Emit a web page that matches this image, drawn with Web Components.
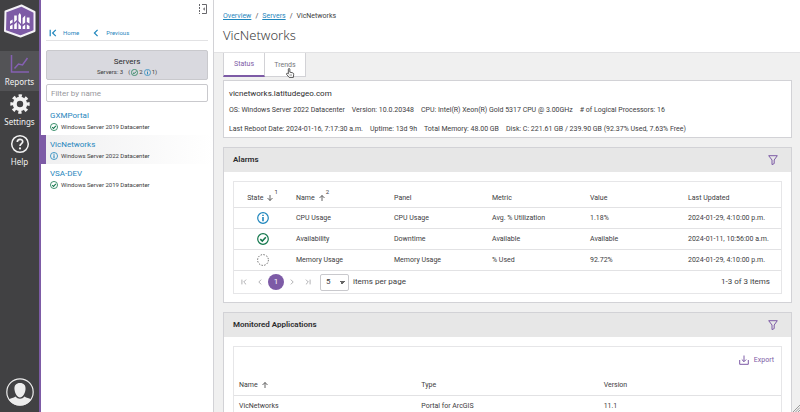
<!DOCTYPE html>
<html lang="en">
<head>
<meta charset="utf-8">
<meta name="viewport" content="width=device-width, initial-scale=1">
<title>VicNetworks</title>
<style>
    body {
        margin: 0;
        height: 100vh;
        overflow: hidden;
        font-family: Roboto, "Noto Sans", sans-serif;
        font-size: 7px;
        line-height: 10px;
        color: #3c3c3e;
        --purple: #7d5ba6;
        --link: #1f86bd;
        --edge: #d2d2d6;
        --wide-font: "Noto Sans", "Open Sans", sans-serif;
    }
</style>
</head>
<body>
<monitor-app></monitor-app>

<script>
const ICONS = {
    logo: `<svg viewBox="0 0 34 34"><path d="M18.500 1.500 31.500 8v19L17.500 32.500 2 27 2.500 7.500Z" fill="#7d5ba6" stroke="#f4f2f7" stroke-width="2" stroke-linejoin="round"/>
        <g fill="#fff"><path d="M7 22l2.600-1.500V25H7zM11.200 20.500l2.600-2.500v7h-2.600zM15.400 19l2.600 3v3h-2.600zM19.600 22.500l2.600-2V25h-2.600zM23.800 20.500l2.700 1.500v3h-2.700z"/>
        <path d="M7 17l2.600-1.500v3L7 20zM11.200 11.500h2.600v4.500l-2.600 2.500zM15.400 11l1.300-2 1.300 2v9l-2.600-3zM19.600 14l2.600-2.500v7l-2.600 2zM23.800 13.500h2.700v6l-2.700-1.500z"/></g></svg>`,
    chart: `<svg viewBox="0 0 20 20" fill="none" stroke="#8560b3" stroke-width="1.500"><path d="M1.500 1v17H19M4.500 14.500l4-4.500 4 1L17.500 4"/></svg>`,
    gear: `<svg viewBox="0 0 20 20" fill="none" stroke="#f2f2f2"><circle cx="10" cy="10" r="5.200" stroke-width="4"/><circle cx="10" cy="10" r="8" stroke-width="3.400" stroke-dasharray="3.142" transform="rotate(-11.250 10 10)"/></svg>`,
    help: `<svg viewBox="0 0 20 20" fill="none" stroke="#f2f2f2" stroke-width="1.500"><circle cx="10" cy="10" r="8.300"/><path d="M7.300 8C7.300 4.500 12.700 4.500 12.700 7.800c0 1.800-2.700 2-2.700 4.200" stroke-width="1.700"/><circle cx="10" cy="14.400" r="1.100" fill="#f2f2f2" stroke="none"/></svg>`,
    user: `<svg viewBox="0 0 28 28"><circle cx="14" cy="14" r="13.200" fill="#414143" stroke="#ececec" stroke-width="1.200"/><path fill="#ececec" d="M14 5c-3.800 0-6 2.300-5.500 6.500.4 4 2.800 8 5.500 8s5.100-4 5.500-8C20 7.300 17.800 5 14 5zM3 21.500c2-1.500 4.500-1.500 6.500-3 1.500 1.500 2.500 2.200 4.500 2.200s3-.7 4.500-2.200c2 1.500 4.500 1.500 6.500 3C22.500 25.500 19 27.500 14 27.500S5.500 25.500 3 21.500z"/></svg>`,
    first: `<svg viewBox="0 0 10 10" fill="none" stroke="currentColor" stroke-width="1.500"><path d="M1.500 1v8M8.500 1 4.500 5l4 4"/></svg>`,
    prev: `<svg viewBox="0 0 10 10" fill="none" stroke="currentColor" stroke-width="1.500"><path d="M7 1 3 5l4 4"/></svg>`,
    next: `<svg viewBox="0 0 10 10" fill="none" stroke="currentColor" stroke-width="1.500"><path d="M3 1l4 4-4 4"/></svg>`,
    last: `<svg viewBox="0 0 10 10" fill="none" stroke="currentColor" stroke-width="1.500"><path d="M8.500 1v8M1.500 1l4 4-4 4"/></svg>`,
    collapse: `<svg viewBox="0 0 8 10" fill="none" stroke="#68686c"><path d="M3 .5h4.500v9H3"/><path d="M.5 0v10" stroke-dasharray="2 1"/><path d="M5.800 3.200 4 5l1.800 1.800z" fill="#68686c" stroke="none"/></svg>`,
    ok: `<svg viewBox="0 0 12 12" fill="none" stroke="#12774c"><circle cx="6" cy="6" r="5.300" stroke-width="1.200"/><path d="m3.300 6.200 2 1.900 3.500-3.800" stroke-width="1.600"/></svg>`,
    info: `<svg viewBox="0 0 12 12" fill="none" stroke="#1f86bd"><circle cx="6" cy="6" r="5.300" stroke-width="1.200"/><path d="M6 5v4.300M6 2.700v1.400" stroke-width="1.600"/></svg>`,
    unknown: `<svg viewBox="0 0 12 12" fill="none" stroke="#666"><circle cx="6" cy="6" r="5.400" stroke-width="1" stroke-dasharray="1.400 1.400"/></svg>`,
    up: `<svg viewBox="0 0 8 8" fill="none" stroke="currentColor" stroke-width=".8"><path d="M4 7V1.500M1.500 4 4 1.500 6.500 4"/></svg>`,
    down: `<svg viewBox="0 0 8 8" fill="none" stroke="currentColor" stroke-width=".8"><path d="M4 1v5.500M1.500 4 4 6.500 6.500 4"/></svg>`,
    filter: `<svg viewBox="0 0 10 10" fill="none" stroke="#7d5ba6" stroke-width="1"><path d="M.7.700h8.600L6.200 5v3.600l-2.200 1V5z"/></svg>`,
    download: `<svg viewBox="0 0 10 10" fill="none" stroke="#7d5ba6" stroke-width="1"><path d="M.7 5v4.300h8.600V5M5 .5v6M2.800 4.500 5 6.700l2.200-2.200"/></svg>`,
    hand: `<svg viewBox="0 0 10 12"><path d="M3 7V1.500C3 .3 4.800.300 4.800 1.500V5l3.400.8c1 .3 1.300 1 1.200 2L9 11.300H4L.8 7.500C.4 6.500 1.500 6 2.200 6.500z" fill="#fff" stroke="#222" stroke-width=".9"/><path d="M5 7.500v2M6.500 7.500v2" stroke="#222" stroke-width=".5"/></svg>`,
    grip: `<svg viewBox="0 0 8 8" stroke="#9a9a9a" stroke-width="1"><path d="M1 8 8 1M3.500 8 8 3.500M6 8l2-2"/></svg>`
};

class BaseElement extends HTMLElement {

    constructor(){
        super();
        this.shadowDOM = this.attachShadow({mode:"open"});
    }

    connectedCallback(){
        this.render();
    }
}

class AppIcon extends BaseElement {

    render(){
        this.shadowDOM.innerHTML = `
        <style>
            :host {
                display: inline-block;
                flex: none;
                width: var(--size, 10px);
                height: var(--size, 10px);
            }
            svg {
                display: block;
                width: 100%;
                height: 100%;
            }
        </style>
        ${ICONS[this.getAttribute("name")]}`;
    }
}

class RailLink extends BaseElement {

    render(){
        this.shadowDOM.innerHTML = `
        <style>
            :host {
                display: block;
            }
            a {
                display: flex;
                flex-direction: column;
                align-items: center;
                gap: 2px;
                padding: 3px 0;
                font-family: var(--wide-font);
                font-size: 8px;
                line-height: 12px;
                color: #f2f2f2;
                text-decoration: none;
            }
            :host([active]) a {
                background: #535356;
            }
            app-icon {
                --size: 20px;
            }
        </style>
        <a href="#"><app-icon name="${this.getAttribute("icon")}"></app-icon><slot></slot></a>`;
    }
}

class NavRail extends BaseElement {

    render(){
        this.shadowDOM.innerHTML = `
        <style>
            :host {
                display: flex;
                flex-direction: column;
                width: 39px;
                background: #414143;
                border-right: 2px solid var(--purple);
            }
            .logo {
                --size: 34px;
                align-self: center;
                margin: 4px 0 13px;
            }
            .user {
                --size: 28px;
                display: block;
                align-self: center;
                margin: auto 0 6px;
                padding: 0;
                border: 0;
                background: none;
            }
            .user app-icon {
                display: block;
            }
        </style>
        <app-icon class="logo" name="logo"></app-icon>
        <rail-link icon="chart" active>Reports</rail-link>
        <rail-link icon="gear">Settings</rail-link>
        <rail-link icon="help">Help</rail-link>
        <button class="user" aria-label="Account"><app-icon name="user"></app-icon></button>`;
    }
}

class ServerItem extends BaseElement {

    render(){
        this.shadowDOM.innerHTML = `
        <style>
            :host {
                display: block;
                padding: 4px 0 3px 4px;
                border-left: 5px solid transparent;
            }
            :host([selected]) {
                border-left-color: var(--purple);
                background: linear-gradient(to right, #f0f0f1, #fff);
            }
            a {
                display: block;
                font-size: 8px;
                line-height: 12px;
                color: var(--link);
                text-decoration: none;
            }
            p {
                display: flex;
                align-items: center;
                gap: 3px;
                margin: 0;
                font-size: 6px;
            }
            app-icon {
                --size: 8px;
            }
        </style>
        <a href="#">${this.getAttribute("name")}</a>
        <p><app-icon name="${this.getAttribute("state")}"></app-icon><slot></slot></p>`;
    }
}

class ServerPanel extends BaseElement {

    render(){
        this.shadowDOM.innerHTML = `
        <style>
            * {
                box-sizing: border-box;
            }
            :host {
                display: flex;
                flex-direction: column;
                width: 172px;
                background: #fff;
                border-right: 1px solid var(--edge);
            }
            .collapse {
                display: block;
                align-self: flex-end;
                margin: 4px 5px 11px;
                padding: 0;
                border: 0;
                background: none;
            }
            .collapse app-icon {
                display: block;
            }
            nav {
                display: flex;
                gap: 13px;
                margin: 0 5px 9px;
                padding: 3px 3px 2px;
                border-bottom: 1px solid #e2e2e4;
            }
            nav a {
                display: flex;
                align-items: center;
                gap: 6px;
                color: var(--link);
                font-size: 6px;
                text-decoration: none;
                --size: 8px;
            }
            .summary {
                margin: 0 5px 4px;
                padding: 5px 0 2px;
                border: 1px solid #c9c9cd;
                border-radius: 2px;
                background: #d9d9df;
                text-align: center;
            }
            h2 {
                margin: 0;
                font-size: 8px;
                font-weight: 400;
                line-height: 11px;
                color: #2b2b2d;
            }
            .summary p {
                display: flex;
                justify-content: center;
                align-items: center;
                gap: 1px;
                margin: 0;
                font-size: 6px;
                --size: 7px;
            }
            .summary span {
                margin-left: 4px;
            }
            input {
                height: 18px;
                margin: 0 5px 4px;
                padding: 0 4px;
                border: 1px solid #c9c9cd;
                border-radius: 2px;
                font: inherit;
                font-size: 8px;
            }
            input::placeholder {
                color: #98989c;
            }
        </style>
        <button class="collapse" aria-label="Collapse panel"><app-icon name="collapse"></app-icon></button>
        <nav>
            <a href="#"><app-icon name="first"></app-icon>Home</a>
            <a href="#"><app-icon name="prev"></app-icon>Previous</a>
        </nav>
        <section class="summary">
            <h2>Servers</h2>
            <p>Servers: 3 <span>(</span><app-icon name="ok"></app-icon>2 <app-icon name="info"></app-icon>1)</p>
        </section>
        <input type="text" placeholder="Filter by name" aria-label="Filter by name">
        <server-item name="GXMPortal" state="ok">Windows Server 2019 Datacenter</server-item>
        <server-item name="VicNetworks" state="info" selected>Windows Server 2022 Datacenter</server-item>
        <server-item name="VSA-DEV" state="ok">Windows Server 2019 Datacenter</server-item>`;
    }
}

class PageHeader extends BaseElement {

    render(){
        this.shadowDOM.innerHTML = `
        <style>
            :host {
                display: block;
                padding: 11px 9px 8px;
                background: #fff;
                border-bottom: 1px solid #e2e2e4;
            }
            nav {
                display: flex;
                gap: 4px;
            }
            a {
                color: var(--link);
            }
            h1 {
                margin: 5px 0 0;
                font-family: var(--wide-font);
                font-size: 13px;
                font-weight: 300;
                line-height: 18px;
            }
        </style>
        <nav><a href="#">Overview</a><span>/</span><a href="#">Servers</a><span>/</span><span>VicNetworks</span></nav>
        <h1>VicNetworks</h1>`;
    }
}

class TabBar extends BaseElement {

    render(){
        this.shadowDOM.innerHTML = `
        <style>
            :host {
                display: flex;
            }
            button {
                position: relative;
                width: 41px;
                height: 24px;
                padding: 0;
                border: 1px solid var(--edge);
                border-width: 0 1px 1px 0;
                background: #fff;
                color: #77777b;
                font: inherit;
            }
            button[aria-selected=true] {
                border-left-width: 1px;
                width: 42px;
                border-bottom: 2px solid var(--purple);
                color: var(--purple);
            }
            /* pointer rests on the hovered tab */
            app-icon {
                position: absolute;
                left: 20px;
                top: 15px;
            }
        </style>
        <button role="tab" aria-selected="true">Status</button>
        <button role="tab" aria-selected="false">Trends<app-icon name="hand"></app-icon></button>`;
    }
}

class ServerInfo extends BaseElement {

    render(){
        this.shadowDOM.innerHTML = `
        <style>
            :host {
                display: block;
                margin: 3px 0 9px;
                padding: 7px 5px 3px;
                border: 1px solid var(--edge);
                background: #fff;
            }
            h2 {
                margin: 0 0 6px;
                font-size: 8px;
                font-weight: 400;
                line-height: 11px;
                color: #2b2b2d;
            }
            p {
                display: flex;
                gap: 7px;
                margin: 0;
            }
            p + p {
                margin-top: 9px;
            }
        </style>
        <h2>vicnetworks.latitudegeo.com</h2>
        <p>
            <span>OS: Windows Server 2022 Datacenter</span>
            <span>Version: 10.0.20348</span>
            <span>CPU: Intel(R) Xeon(R) Gold 5317 CPU @ 3.00GHz</span>
            <span># of Logical Processors: 16</span>
        </p>
        <p>
            <span>Last Reboot Date: 2024-01-16, 7:17:30 a.m.</span>
            <span>Uptime: 13d 9h</span>
            <span>Total Memory: 48.00 GB</span>
            <span>Disk: C: 221.61 GB / 239.90 GB (92.37% Used, 7.63% Free)</span>
        </p>`;
    }
}

class PanelCard extends BaseElement {

    render(){
        this.shadowDOM.innerHTML = `
        <style>
            :host {
                display: block;
                margin-bottom: 9px;
                border: 1px solid var(--edge);
                background: #fff;
            }
            header {
                display: flex;
                align-items: center;
                justify-content: space-between;
                height: 24px;
                padding: 0 13px 0 9px;
                background: #e7e7e7;
            }
            h2 {
                margin: 0;
                font-size: 8px;
                font-weight: 600;
                color: #2b2b2d;
            }
            button {
                padding: 0;
                border: 0;
                background: none;
            }
            app-icon {
                display: block;
            }
            .body {
                margin: 9px 9px 8px;
                border: 1px solid #e6e6e8;
            }
        </style>
        <header>
            <h2>${this.getAttribute("heading")}</h2>
            <button aria-label="Filter"><app-icon name="filter"></app-icon></button>
        </header>
        <div class="body"><slot></slot></div>`;
    }
}

const TABLE_STYLE = `
    :host {
        display: block;
    }
    table {
        width: 100%;
        border-collapse: separate;
        border-spacing: 0;
        table-layout: fixed;
    }
    th, td {
        box-sizing: border-box;
        height: 21px;
        padding: 0 5px;
        border-bottom: 1px solid #e2e2e4;
        font-weight: 400;
        text-align: left;
        white-space: nowrap;
    }
    th app-icon {
        --size: 8px;
        margin-left: 3px;
        vertical-align: middle;
    }
    sup {
        font-size: 6px;
        line-height: 0;
        vertical-align: 6px;
    }`;

class AlarmGrid extends BaseElement {

    render(){
        const rows = [
            ["info", "CPU Usage", "CPU Usage", "Avg. % Utilization", "1.18%", "2024-01-29, 4:10:00 p.m."],
            ["ok", "Availability", "Downtime", "Available", "Available", "2024-01-11, 10:56:00 a.m."],
            ["unknown", "Memory Usage", "Memory Usage", "% Used", "92.72%", "2024-01-29, 4:10:00 p.m."]
        ];
        this.shadowDOM.innerHTML = `
        <style>
            ${TABLE_STYLE}
            th {
                height: 26px;
                padding-top: 6px;
            }
            th:first-child, td:first-child {
                width: 57px;
                text-align: center;
            }
            td app-icon {
                --size: 12px;
                display: block;
                margin: 0 auto;
            }
        </style>
        <table>
            <thead><tr>
                <th>State<app-icon name="down"></app-icon><sup>1</sup></th>
                <th>Name<app-icon name="up"></app-icon><sup>2</sup></th>
                <th>Panel</th><th>Metric</th><th>Value</th><th>Last Updated</th>
            </tr></thead>
            <tbody>${rows.map(([state, ...cells]) => `
                <tr><td><app-icon name="${state}"></app-icon></td>${cells.map(cell => `<td>${cell}</td>`).join("")}</tr>`).join("")}
            </tbody>
        </table>
        <grid-pager></grid-pager>`;
    }
}

class GridPager extends BaseElement {

    render(){
        this.shadowDOM.innerHTML = `
        <style>
            :host {
                display: flex;
                align-items: center;
                height: 22px;
                padding: 0 11px 0 2px;
                font-size: 8px;
            }
            button {
                display: grid;
                place-items: center;
                width: 16px;
                height: 16px;
                padding: 0;
                border: 0;
                border-radius: 50%;
                background: none;
                color: #a8a8ac;
                font: inherit;
                --size: 6px;
            }
            .current {
                background: var(--purple);
                color: #fff;
            }
            label {
                display: flex;
                flex-direction: row-reverse;
                align-items: center;
                gap: 4px;
                margin-left: 4px;
            }
            select {
                appearance: none;
                box-sizing: border-box;
                width: 29px;
                height: 17px;
                padding: 0 5px;
                border: 1px solid #c9c9cd;
                border-radius: 2px;
                background: linear-gradient(to bottom right, #666 50%, transparent 50%) 21px 6px / 3px 3px no-repeat,
                    linear-gradient(to bottom left, #666 50%, transparent 50%) 18px 6px / 3px 3px no-repeat, #fff;
                color: inherit;
                font: inherit;
            }
            .count {
                margin-left: auto;
            }
        </style>
        <button aria-label="First page"><app-icon name="first"></app-icon></button>
        <button aria-label="Previous page"><app-icon name="prev"></app-icon></button>
        <button class="current">1</button>
        <button aria-label="Next page"><app-icon name="next"></app-icon></button>
        <button aria-label="Last page"><app-icon name="last"></app-icon></button>
        <label>items per page <select><option>5</option><option>10</option></select></label>
        <span class="count">1-3 of 3 items</span>`;
    }
}

class ApplicationGrid extends BaseElement {

    render(){
        this.shadowDOM.innerHTML = `
        <style>
            ${TABLE_STYLE}
            .toolbar {
                display: flex;
                justify-content: flex-end;
                padding: 8px 7px 4px;
            }
            button {
                display: flex;
                align-items: center;
                gap: 5px;
                padding: 0;
                border: 0;
                background: none;
                color: var(--purple);
                font: inherit;
            }
            th {
                height: 27px;
                padding-top: 5px;
            }
        </style>
        <div class="toolbar"><button><app-icon name="download"></app-icon>Export</button></div>
        <table>
            <thead><tr><th>Name<app-icon name="up"></app-icon></th><th>Type</th><th>Version</th></tr></thead>
            <tbody><tr><td>VicNetworks</td><td>Portal for ArcGIS</td><td>11.1</td></tr></tbody>
        </table>`;
    }
}

class MonitorApp extends BaseElement {

    render(){
        this.shadowDOM.innerHTML = `
        <style>
            :host {
                position: relative;
                display: grid;
                grid-template-columns: auto auto minmax(0, 1fr);
                grid-template-rows: minmax(0, 1fr);
                height: 100%;
                background: #f0f0f0;
            }
            main {
                overflow: hidden;
            }
            .content {
                padding: 0 8px 0 9px;
            }
            .grip {
                --size: 8px;
                position: absolute;
                right: 0;
                bottom: 0;
            }
        </style>
        <nav-rail></nav-rail>
        <server-panel></server-panel>
        <main>
            <page-header></page-header>
            <div class="content">
                <tab-bar></tab-bar>
                <server-info></server-info>
                <panel-card heading="Alarms"><alarm-grid></alarm-grid></panel-card>
                <panel-card heading="Monitored Applications"><application-grid></application-grid></panel-card>
            </div>
        </main>
        <app-icon class="grip" name="grip"></app-icon>`;
    }
}

customElements.define("app-icon", AppIcon);
customElements.define("rail-link", RailLink);
customElements.define("nav-rail", NavRail);
customElements.define("server-item", ServerItem);
customElements.define("server-panel", ServerPanel);
customElements.define("page-header", PageHeader);
customElements.define("tab-bar", TabBar);
customElements.define("server-info", ServerInfo);
customElements.define("panel-card", PanelCard);
customElements.define("grid-pager", GridPager);
customElements.define("alarm-grid", AlarmGrid);
customElements.define("application-grid", ApplicationGrid);
customElements.define("monitor-app", MonitorApp);
</script>
</body>
</html>
